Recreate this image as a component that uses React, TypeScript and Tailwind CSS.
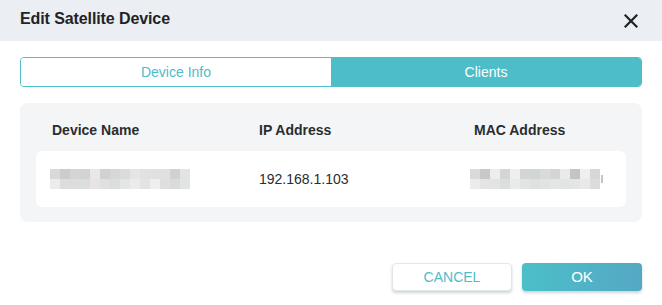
import React from "react";

const nameBlocks = [
  ["#d8d9d9", "#cbcccc", "#d4d6d5", "#d2d4d3", "#e8e8e8", "#cfd1d2", "#d6d8d8", "#dadcdc", "#e4e5e5", "#e0e1e1", "#dfe0e0", "#e0e0e0", "#d0d1d2", "#e3e3e3"],
  ["#ececec", "#dcdedd", "#dcdddc", "#dcdddd", "#e6e5e3", "#dfe1e0", "#dcdddd", "#e4e5e5", "#ebebeb", "#e2e3e3", "#efefef", "#dfdfdf", "#d9dadb", "#e2e3e3"],
];
const macBlocks = [
  ["#d9dada", "#c7c9c9", "#ededed", "#d4d5d5", "#efefef", "#d4d6d6", "#d2d5d6", "#d9dbdb", "#d4d6d6", "#e9eae9", "#c2c4c5", "#eef0ef", "#d5d7d8"],
  ["#ececec", "#e3e4e4", "#e3e3e3", "#dcdddd", "#e9eaea", "#e2e3e3", "#dfe0e0", "#e1e2e2", "#e4e5e5", "#e2e3e3", "#e4e5e5", "#e9e9e9", "#dcdcdc"],
];

function Pixelated({ rows }: { rows: string[][] }) {
  return (
    <div className="flex flex-col">
      {rows.map((r, i) => (
        <div key={i} className="flex">
          {r.map((c, j) => (
            <div key={j} className="w-[10px] h-[10px]" style={{ backgroundColor: c }} />
          ))}
        </div>
      ))}
    </div>
  );
}

export default function App() {
  return (
    <div
      className="w-[662px] h-[305px] bg-white flex flex-col"
      style={{ fontFamily: '"Liberation Sans", Arial, sans-serif' }}
    >
      <div className="h-[41px] bg-[#ebeef2] flex items-center justify-between pl-[20px] pr-[24px]">
        <div className="text-[16px] font-bold text-[#1f2326] pb-[4px] tracking-[-0.1px]">Edit Satellite Device</div>
        <svg width="14" height="14" viewBox="0 0 14 14" className="mt-[1px]">
          <path d="M1.5 1.5 L12.5 12.5 M12.5 1.5 L1.5 12.5" stroke="#1f2326" strokeWidth="2.2" strokeLinecap="square" />
        </svg>
      </div>

      <div className="px-[20px] pt-[16px]">
        <div className="flex h-[30px] rounded-[4px] border border-[#4dbdc9] overflow-hidden">
          <div className="flex-1 bg-white flex items-center justify-center text-[14px] text-[#4dbdc9]">Device Info</div>
          <div className="flex-1 bg-[#4dbdc9] flex items-center justify-center text-[14px] text-white">Clients</div>
        </div>

        <div className="mt-[16px] h-[119px] bg-[#f4f5f7] rounded-[8px] px-[16px] pt-[17px]">
          <div className="grid grid-cols-[207px_215px_1fr] px-[16px] h-[20px] items-center text-[14px] font-bold text-[#2a2d30]">
            <div>Device Name</div>
            <div>IP Address</div>
            <div>MAC Address</div>
          </div>
          <div className="mt-[11px] h-[56px] bg-white rounded-[6px] grid grid-cols-[209px_211px_1fr] pl-[14px] items-center text-[14px] text-[#2a2d30]">
            <div><Pixelated rows={nameBlocks} /></div>
            <div>192.168.1.103</div>
            <div className="flex items-center">
              <Pixelated rows={macBlocks} />
              <div className="w-[2px] h-[8px] bg-[#9aa0a3] ml-[1px] opacity-60" />
            </div>
          </div>
        </div>
      </div>

      <div className="flex justify-end gap-[10px] pr-[20px] mt-[41px]">
        <button className="w-[120px] h-[28px] rounded-[4px] bg-white border border-[#e3e7ea] shadow-[0_2px_3px_rgba(60,90,100,0.25)] text-[14px] text-[#4dbdc9]">
          CANCEL
        </button>
        <button className="w-[120px] h-[28px] rounded-[4px] bg-gradient-to-r from-[#4bbfc9] to-[#54a8c4] shadow-[0_2px_3px_rgba(60,90,100,0.25)] text-[15px] text-white">
          OK
        </button>
      </div>
    </div>
  );
}
